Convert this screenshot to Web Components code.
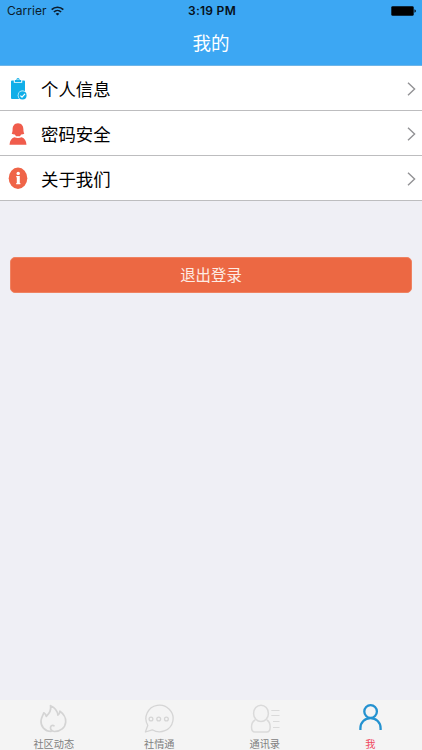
<!DOCTYPE html>
<html lang="zh-CN">
<head>
<meta charset="utf-8">
<title>我的</title>
<style>
html,body{margin:0;height:100%}
body{font-family:Inter,"Noto Sans CJK SC",sans-serif;background:#efeff5;overflow:hidden}
</style>
</head>
<body>
<profile-page></profile-page>
<script>
const define = (name, html) => customElements.define(name, class extends HTMLElement {
  constructor() {
    super();
    const t = document.createElement('template');
    t.innerHTML = html;
    this.attachShadow({mode: 'open'}).append(t.content.cloneNode(true));
  }
});

define('status-bar', `
<style>
:host{display:grid;grid-template-columns:1fr auto 1fr;align-items:center;height:22px;padding:0 6px 0 7px;color:#0b1c2b;font-size:12px;line-height:22px}
.left{display:flex;align-items:center;gap:5px;letter-spacing:.02px}
.time{font-weight:600;letter-spacing:.28px;font-size:12px;color:#061019;padding-left:1px}
.right{display:flex;justify-content:flex-end}
svg{display:block}
</style>
<div class="left"><span>Carrier</span>
<svg width="13" height="10" viewBox="0 0 13 10" fill="none" stroke="#0b1c2b" stroke-width="1.7"><path d="M.7 3.7C3.8.4 9.2.4 12.3 3.7M2.9 6C4.9 4 8.1 4 10.1 6"/><path d="M6.5 9.6 4.6 7.7Q6.5 6.3 8.4 7.7Z" fill="#0b1c2b" stroke="none"/></svg></div>
<span class="time">3:19 PM</span>
<div class="right"><svg width="25" height="10" viewBox="0 0 25 10"><rect x=".3" y=".2" width="22.4" height="9.6" rx="1.4" fill="#000"/><path d="M23.4 3.2Q25 3.8 25 5T23.4 6.8Z" fill="#0b1c2b"/></svg></div>`);

define('nav-bar', `
<style>
:host{display:block;height:65px;background:#3ca7f3;border-bottom:1px solid #6eb5e8}
h1{margin:0;font-size:18.5px;line-height:42px;font-weight:400;text-align:center;color:#fff}
</style>
<status-bar></status-bar><h1><slot></slot></h1>`);

define('menu-row', `
<style>
:host{display:flex;box-sizing:border-box;height:45px;align-items:center;background:#fff;border-bottom:1px solid #bdbdbf;padding:1px 6px 0 8px}
.icon{width:20px;height:24px;flex:none}
.label{flex:1;margin-left:13px;padding-top:2px;font-size:17.4px;line-height:26px;color:#000}
svg{display:block}
</style>
<div class="icon"><slot name="icon"></slot></div><div class="label"><slot></slot></div>
<svg width="9" height="16" viewBox="0 0 9 16" fill="none" stroke="#929295" stroke-width="1.4"><path d="M1 1.7 7.6 8 1 14.3"/></svg>`);

define('action-button', `
<style>
:host{display:block;margin:56px 10px 0}
button{display:block;width:100%;height:36px;border:1px solid #ef8261;border-radius:5px;background:#ec6843;color:#fdebe3;font:400 15.4px/34px Inter,"Noto Sans CJK SC",sans-serif;padding:1px 0 0}
</style>
<button><slot></slot></button>`);

define('tab-item', `
<style>
:host{display:flex;flex:1;flex-direction:column;align-items:center;color:#808080}
:host([active]){color:#f0485c}
.icon{height:30px;width:32px;margin-top:3px}
.label{font-size:10.2px;line-height:14px;margin-top:4px}
</style>
<div class="icon"><slot name="icon"></slot></div><div class="label"><slot></slot></div>`);

define('tab-bar', `
<style>
:host{display:flex;height:50px;background:#f4f4f4;padding-left:1px;margin-right:-1px}
</style><slot></slot>`);

define('profile-page', `
<style>
:host{display:flex;flex-direction:column;height:750px;width:422px;background:#efeff5}
main{flex:1}
svg{display:block}
</style>
<nav-bar>我的</nav-bar>
<main>
<menu-row>
<svg slot="icon" width="20" height="24" viewBox="0 0 20 24"><path d="M4 3.4H5.8V5.8H14.2V3.4H16Q17 3.4 17 4.4V22H4Q3 22 3 21V4.4Q3 3.4 4 3.4Z" fill="#10aee8"/><path d="M6.8 5V3H8.3Q8.5 .9 10 .9T11.7 3H13.2V5Z" fill="#10aee8"/><circle cx="10" cy="2.6" r=".6" fill="#fff"/><circle cx="14.5" cy="18.4" r="4.8" fill="#fff"/><circle cx="14.5" cy="18.4" r="4.1" fill="#10aee8"/><path d="M12.4 18.6 14 20.1 17 16.8" fill="none" stroke="#fff" stroke-width="1.2"/></svg>
个人信息</menu-row>
<menu-row>
<svg slot="icon" width="20" height="24" viewBox="0 0 20 24" fill="#f05c4c"><path d="M10 1.2C6.2 1.2 4.6 4.2 4.6 7.3 4.6 9.3 4.2 10.8 3.7 11.8 5 12.5 6 12.6 6.9 12.5L8 14.2H12L13.1 12.5C14 12.6 15 12.5 16.3 11.8 15.8 10.8 15.4 9.3 15.4 7.3 15.4 4.2 13.8 1.2 10 1.2Z"/><path d="M1.5 22.7Q1.9 16.9 6.3 15.2 10 16.6 13.7 15.2 18.1 16.9 18.5 22.7Z"/></svg>
密码安全</menu-row>
<menu-row>
<svg slot="icon" width="20" height="24" viewBox="0 0 20 24"><ellipse cx="10" cy="11.2" rx="9.3" ry="10.7" fill="#ef6448"/><circle cx="10.2" cy="6.4" r="1.7" fill="#fff"/><path d="M8.2 9.1H11.8V16H12.4V17.2H8.2V16H8.8V10.3H8.2Z" fill="#fff"/></svg>
关于我们</menu-row>
<action-button>退出登录</action-button>
</main>
<tab-bar>
<tab-item><svg slot="icon" width="32" height="30" viewBox="0 0 32 30" fill="none" stroke="#d4d4d4" stroke-width="1.7" stroke-linecap="round" stroke-linejoin="round"><path d="M13 28.5C6.5 28.3 2.7 23.4 3 17.8 3.3 14.6 5 12.5 5.8 9.8 7.4 10.7 8 12 8.3 13.3 11.5 10.5 13.3 6.8 12.5 2.7 17 4.7 19.5 8 19.9 12.2 21.2 11.2 21.8 9.8 21.9 8.2 24.5 10 28.1 14.3 27.7 19 27.3 24.6 22.6 28.6 16.2 28.5 13.8 28.2 12.2 26.5 12.5 24.4 12.8 22.6 14.7 21.8 16 22.8"/></svg>社区动态</tab-item>
<tab-item><svg slot="icon" width="32" height="30" viewBox="0 0 32 30" fill="none" stroke="#d5d5d5" stroke-width="1.3"><path d="M4.8 22.3A13.6 13.3 0 1 1 9.3 26.8L2.4 29Z" stroke-linejoin="round"/><circle cx="8" cy="16" r="1.9"/><circle cx="15.7" cy="16" r="1.9"/><circle cx="23.4" cy="16" r="1.9"/></svg>社情通</tab-item>
<tab-item><svg slot="icon" width="32" height="30" viewBox="0 0 32 30" fill="none" stroke="#dadada" stroke-width="1.5"><ellipse cx="12" cy="10.4" rx="7.4" ry="8.2"/><path d="M6.2 17C3.8 18.2 2.5 20.6 2.5 24 2.5 27.6 3.4 29 6 29H17.6C20.2 29 21.2 27.6 21.2 24 21.2 20.6 20 18.2 17.8 17"/><path d="M22.3 7.5H30.5M22.3 12.5H30.5M24 18.5H30.5M24 24.5H30.5" stroke-width="1.2"/></svg>通讯录</tab-item>
<tab-item active><svg slot="icon" width="32" height="30" viewBox="0 0 32 30" fill="none" stroke="#2492d0" stroke-width="2.3"><circle cx="16.6" cy="8.5" r="6.3"/><path d="M6.4 27V25.2C6.4 19.5 10.8 15.1 16.5 15.1S26.6 19.5 26.6 25.2V27"/></svg>我</tab-item>
</tab-bar>`);
</script>
</body>
</html>
